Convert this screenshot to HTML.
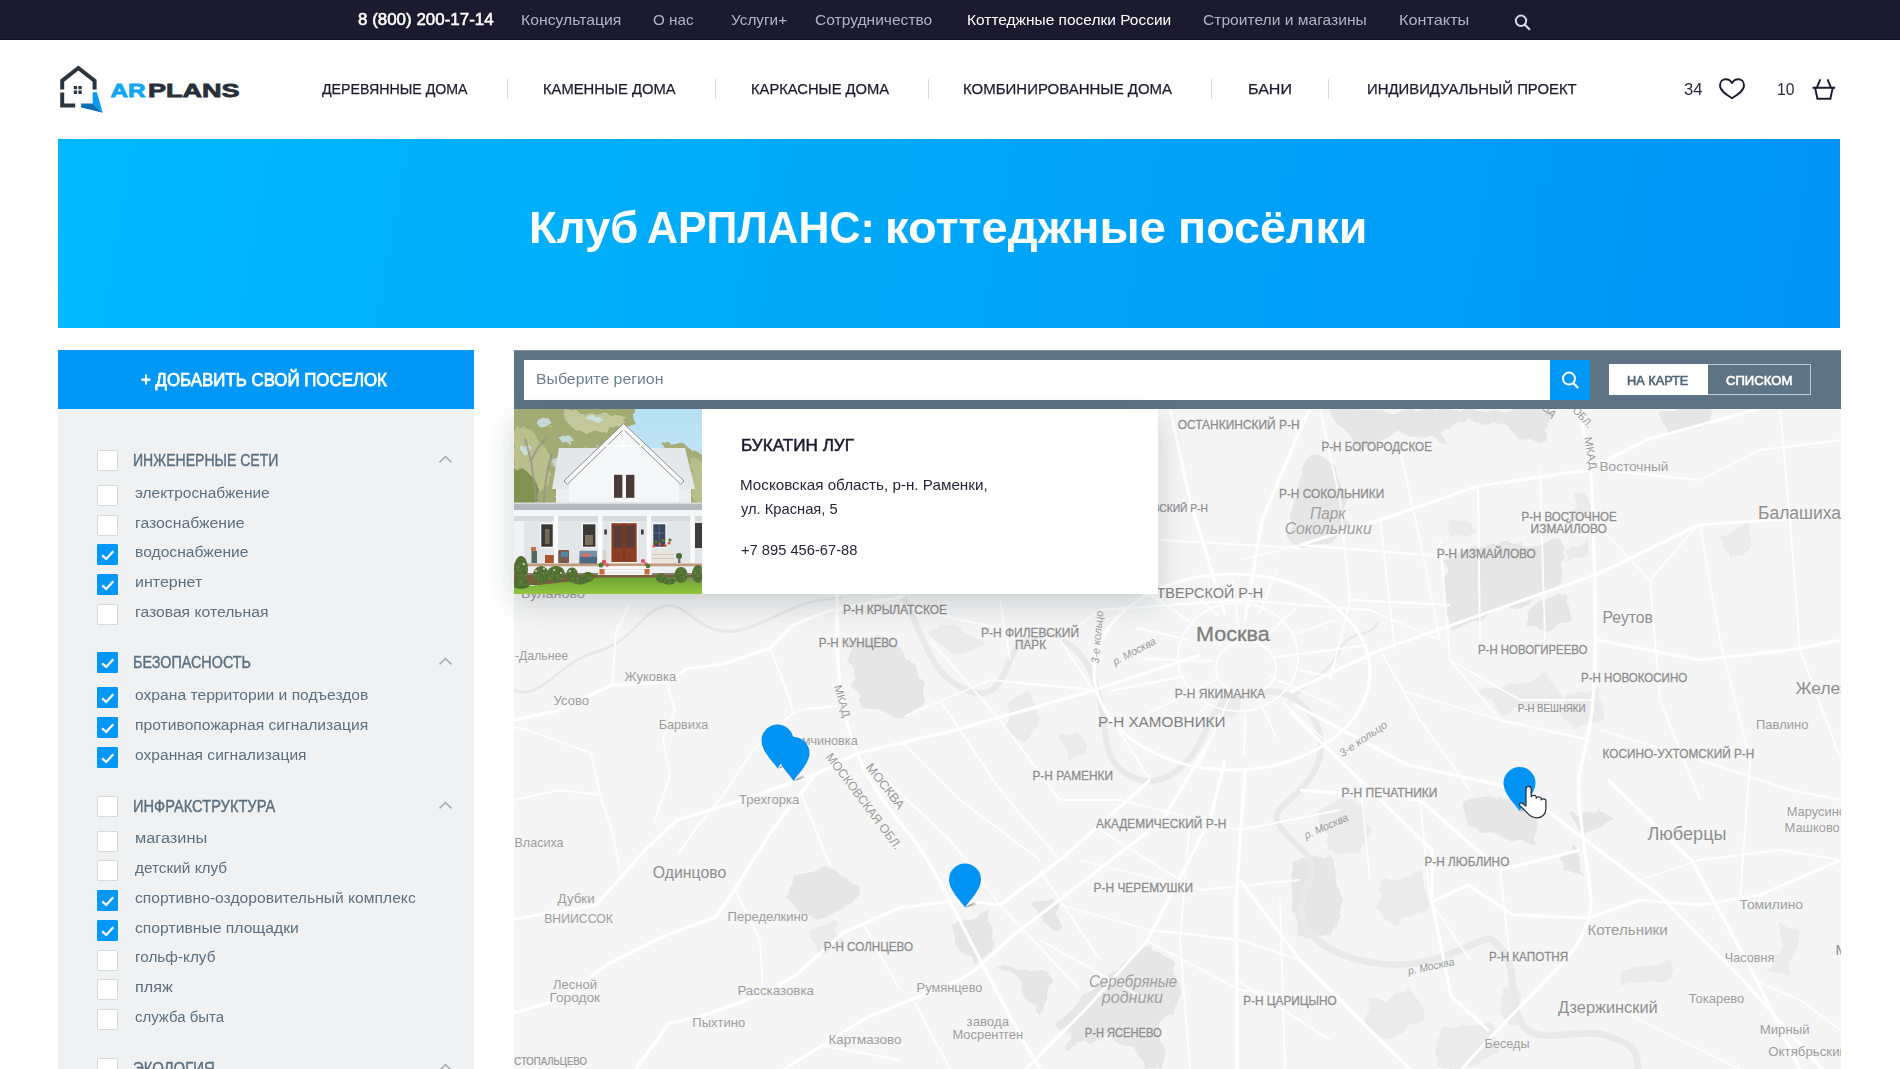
<!DOCTYPE html>
<html lang="ru">
<head>
<meta charset="utf-8">
<title>Клуб АРПЛАНС: коттеджные посёлки</title>
<style>
*{box-sizing:border-box;margin:0;padding:0}
html,body{width:1900px;height:1069px;overflow:hidden;background:#fff}
body{position:relative;font-family:"Liberation Sans",sans-serif;color:#1c1a2e}
.abs{position:absolute}
.tx{position:absolute;white-space:nowrap;line-height:20px;display:block;transform-origin:0 0}
.topbar{left:0;top:0;width:1900px;height:40px;background:#1c1a2e;border-bottom:1px solid #100f1c}
.sep{position:absolute;top:79px;width:1px;height:20px;background:#d3dae2}
.banner{left:58px;top:139px;width:1782px;height:189px;background:linear-gradient(100deg,#00b9fb 0%,#00a8f8 45%,#0094f5 100%)}
.sidebtn{left:58px;top:350px;width:416px;height:59px;background:#0097f6}
.sidebody{left:58px;top:409px;width:416px;height:660px;background:#f0f1f3}
.cb{position:absolute;left:97px;width:21px;height:21px;background:#fff;border:1px solid #d6dade;border-radius:1px}
.cb.on{background:#0097f6;border-color:#0097f6}
.cb.on svg{position:absolute;left:-1px;top:-1px;width:21px;height:21px}
.chev{position:absolute;left:438px;width:15px;height:9px}
.mapwrap{left:514px;top:350px;width:1327px;height:719px;background:#f5f5f5;overflow:hidden}
.toolbar{left:514px;top:350px;width:1327px;height:59px;background:#5e7485;border-top:1px solid #7f919e}
.input{left:523.5px;top:359.7px;width:1026.5px;height:40px;background:#fff}
.sbtn{left:1550px;top:359.7px;width:40px;height:40px;background:#0097f6}
.tg1{left:1609px;top:364px;width:99px;height:31px;background:#fff}
.tg2{left:1708px;top:364px;width:103px;height:31px;border:1px solid #c3ccd4;border-left:none;background:#5e7485}
.card{left:514px;top:409px;width:644px;height:185px;background:#fff;box-shadow:0 10px 28px rgba(30,40,50,.18)}
.photo{left:514px;top:409px;width:188px;height:185px;overflow:hidden}
</style>
</head>
<body>

<div class="abs topbar"></div>
<svg class="abs" style="left:1513px;top:13px" width="19" height="19" viewBox="0 0 19 19"><circle cx="8" cy="7.8" r="5.2" fill="none" stroke="#d9d9e2" stroke-width="2"/><path d="M11.9 11.8 L16.3 16.2" stroke="#d9d9e2" stroke-width="2.2" stroke-linecap="round"/></svg>
<!-- logo -->
<svg class="abs" style="left:55px;top:60px" width="195" height="58" viewBox="55 60 195 58">
  <path d="M60.2 89.5 V79.7 L78.3 65.6 L96.6 79.7 V89.5 H92.6 V81.7 L78.3 70.6 L64.2 81.7 V89.5 Z" fill="#2b353d"/>
  <path d="M60.2 92.5 H64.2 V103.6 H75.2 V107.6 H60.2 Z" fill="#2b353d"/>
  <path d="M73.8 86 h3.3 v3.3 h-3.3z M78.4 86 h3.3 v3.3 h-3.3z M73.8 90.6 h3.3 v3.3 h-3.3z M78.4 90.6 h3.3 v3.3 h-3.3z" fill="#2b353d"/>
  <path d="M92.6 92.2 H96.9 L102.8 112.8 L92.6 103.6 Z" fill="#0a9bf5"/>
  <path d="M81.2 103.6 H92.6 L102.8 112.8 L81.2 107.6 Z" fill="#0f6fb4"/>
  <text x="110.4" y="96.8" font-family="Liberation Sans, sans-serif" font-weight="700" font-size="19.2" textLength="35" lengthAdjust="spacingAndGlyphs" fill="#12a5f4" stroke="#12a5f4" stroke-width=".8" stroke-linejoin="miter">AR</text>
  <text x="147.9" y="96.8" font-family="Liberation Sans, sans-serif" font-weight="700" font-size="19.2" textLength="91.7" lengthAdjust="spacingAndGlyphs" fill="#27303a" stroke="#27303a" stroke-width=".8" stroke-linejoin="miter">PLANS</text>
</svg>
<div class="sep" style="left:507px"></div>
<div class="sep" style="left:715px"></div>
<div class="sep" style="left:928px"></div>
<div class="sep" style="left:1211px"></div>
<div class="sep" style="left:1328px"></div>
<!-- heart -->
<svg class="abs" style="left:1716px;top:75px" width="32" height="28" viewBox="1716 75 32 28"><path d="M1732 98.2 C1727 95 1720 91 1720 85.2 C1720 81.6 1722.6 79.2 1725.8 79.2 C1728.4 79.2 1730.6 80.6 1732 83 C1733.4 80.6 1735.6 79.2 1738.2 79.2 C1741.4 79.2 1744 81.6 1744 85.2 C1744 91 1737 95 1732 98.2 Z" fill="none" stroke="#1c1a2e" stroke-width="1.9" stroke-linejoin="round"/></svg>
<!-- basket -->
<svg class="abs" style="left:1808px;top:75px" width="32" height="28" viewBox="1808 75 32 28"><path d="M1812.6 87.7 H1835.2 M1815.1 87.7 L1817.4 98.7 H1830.4 L1832.7 87.7 M1820.3 79.3 L1816.9 87.4 M1827.5 79.3 L1830.9 87.4" fill="none" stroke="#1c1a2e" stroke-width="1.9"/></svg>
<div class="abs banner"></div>

<div class="abs sidebtn"></div>
<div class="abs sidebody"></div>
<div class="cb" style="top:450.2px"></div>
<svg class="chev" style="top:454.9px" viewBox="0 0 15 9"><path d="M1.5 7.4 L7.5 1.7 L13.5 7.4" fill="none" stroke="#a6b1bc" stroke-width="1.6"/></svg>
<div class="cb" style="top:485.0px"></div>
<div class="cb" style="top:514.7px"></div>
<div class="cb on" style="top:544.3px"><svg viewBox="0 0 21 21"><path d="M5.2 11.4 L9.2 15 L16.3 7.2" fill="none" stroke="#fff" stroke-width="2.3"/></svg></div>
<div class="cb on" style="top:574.0px"><svg viewBox="0 0 21 21"><path d="M5.2 11.4 L9.2 15 L16.3 7.2" fill="none" stroke="#fff" stroke-width="2.3"/></svg></div>
<div class="cb" style="top:603.8px"></div>
<div class="cb on" style="top:652.4px"><svg viewBox="0 0 21 21"><path d="M5.2 11.4 L9.2 15 L16.3 7.2" fill="none" stroke="#fff" stroke-width="2.3"/></svg></div>
<svg class="chev" style="top:657.1px" viewBox="0 0 15 9"><path d="M1.5 7.4 L7.5 1.7 L13.5 7.4" fill="none" stroke="#a6b1bc" stroke-width="1.6"/></svg>
<div class="cb on" style="top:687.4px"><svg viewBox="0 0 21 21"><path d="M5.2 11.4 L9.2 15 L16.3 7.2" fill="none" stroke="#fff" stroke-width="2.3"/></svg></div>
<div class="cb on" style="top:717.0px"><svg viewBox="0 0 21 21"><path d="M5.2 11.4 L9.2 15 L16.3 7.2" fill="none" stroke="#fff" stroke-width="2.3"/></svg></div>
<div class="cb on" style="top:746.7px"><svg viewBox="0 0 21 21"><path d="M5.2 11.4 L9.2 15 L16.3 7.2" fill="none" stroke="#fff" stroke-width="2.3"/></svg></div>
<div class="cb" style="top:796.2px"></div>
<svg class="chev" style="top:800.9px" viewBox="0 0 15 9"><path d="M1.5 7.4 L7.5 1.7 L13.5 7.4" fill="none" stroke="#a6b1bc" stroke-width="1.6"/></svg>
<div class="cb" style="top:830.6px"></div>
<div class="cb" style="top:860.2px"></div>
<div class="cb on" style="top:889.9px"><svg viewBox="0 0 21 21"><path d="M5.2 11.4 L9.2 15 L16.3 7.2" fill="none" stroke="#fff" stroke-width="2.3"/></svg></div>
<div class="cb on" style="top:919.7px"><svg viewBox="0 0 21 21"><path d="M5.2 11.4 L9.2 15 L16.3 7.2" fill="none" stroke="#fff" stroke-width="2.3"/></svg></div>
<div class="cb" style="top:949.5px"></div>
<div class="cb" style="top:979.1px"></div>
<div class="cb" style="top:1008.9px"></div>
<div class="cb" style="top:1058.1px"></div>
<svg class="chev" style="top:1062.8px" viewBox="0 0 15 9"><path d="M1.5 7.4 L7.5 1.7 L13.5 7.4" fill="none" stroke="#a6b1bc" stroke-width="1.6"/></svg>
<div class="abs mapwrap">
<svg width="1327" height="719" viewBox="514 350 1327 719" font-family="Liberation Sans, sans-serif">
<rect x="514" y="350" width="1327" height="719" fill="#f5f5f5"/>
<defs><filter id="rough" x="-2%" y="-2%" width="104%" height="104%"><feTurbulence type="fractalNoise" baseFrequency="0.045" numOctaves="3" seed="11" result="n"/><feDisplacementMap in="SourceGraphic" in2="n" scale="16" xChannelSelector="R" yChannelSelector="G"/></filter></defs>
<g filter="url(#rough)">
<polygon points="1330,409 1551,409 1546,439 1517,442 1507,427 1461,420 1446,431 1446,444 1395,432 1380,440 1362,452 1340,430" fill="#e6e6e6"/>
<polygon points="1656,409 1718,409 1708,425 1666,432" fill="#e6e6e6"/>
<polygon points="1312,452 1338,466 1343,492 1346,512 1352,526 1330,545 1300,548 1288,536 1292,510 1298,480" fill="#e6e6e6"/>
<polygon points="1444,562 1470,548 1560,541 1562,588 1520,603 1478,620 1452,630 1446,600" fill="#e6e6e6"/>
<polygon points="1527,606 1562,594 1570,622 1545,632 1530,624" fill="#e6e6e6"/>
<polygon points="1575,495 1590,488 1592,520 1571,524" fill="#ebebeb"/>
<polygon points="1562,548 1592,540 1592,556 1566,562" fill="#ebebeb"/>
<polygon points="1453,525 1470,520 1478,530 1462,540 1450,536" fill="#ebebeb"/>
<polygon points="846,640 878,636 905,650 922,676 925,700 905,716 872,712 852,690" fill="#e6e6e6"/>
<polygon points="930,632 960,625 985,640 975,655 945,650" fill="#ebebeb"/>
<polygon points="1010,700 1032,694 1040,720 1022,742 1005,730" fill="#ebebeb"/>
<polygon points="1060,738 1078,730 1090,748 1072,760" fill="#ebebeb"/>
<polygon points="1216,700 1236,694 1240,712 1222,722" fill="#ebebeb"/>
<polygon points="1462,801 1500,796 1535,804 1537,845 1503,840 1468,826" fill="#e6e6e6"/>
<polygon points="1568,815 1600,807 1608,820 1587,837" fill="#e6e6e6"/>
<polygon points="1573,842 1584,874 1565,875 1562,856" fill="#e6e6e6"/>
<polygon points="1318,806 1352,800 1372,826 1360,856 1330,850" fill="#ebebeb"/>
<polygon points="1560,700 1600,688 1606,720 1572,730" fill="#ebebeb"/>
<polygon points="1480,690 1552,672 1560,700 1500,716" fill="#ebebeb"/>
<polygon points="1296,862 1334,858 1342,900 1330,936 1300,940 1290,905" fill="#e6e6e6"/>
<polygon points="1380,880 1420,872 1432,905 1400,925 1378,910" fill="#ebebeb"/>
<polygon points="950,925 987,913 993,930 985,962 976,966 958,948" fill="#e6e6e6"/>
<polygon points="1031,902 1053,898 1064,925 1055,934 1042,921" fill="#e6e6e6"/>
<polygon points="997,967 1047,966 1055,983 1040,1015 1024,1002 1021,981" fill="#e6e6e6"/>
<polygon points="1147,943 1174,962 1179,1004 1161,1025 1163,1069 1144,1069 1129,1044 1108,1038 1068,1049 1060,1020 1084,994 1116,970" fill="#e6e6e6"/>
<polygon points="795,872 830,866 858,884 852,905 826,918 800,915 788,896" fill="#e6e6e6"/>
<polygon points="808,928 834,922 840,945 818,955" fill="#ebebeb"/>
<polygon points="1370,1000 1415,990 1425,1020 1390,1040 1368,1028" fill="#ebebeb"/>
<polygon points="1502,985 1518,980 1522,1020 1508,1026" fill="#ebebeb"/>
<polygon points="1440,1030 1490,1022 1500,1050 1460,1069 1435,1069" fill="#ebebeb"/>
<polygon points="1778,920 1800,931 1789,975 1770,972 1781,942" fill="#ebebeb"/>
<polygon points="1619,975 1670,961 1673,980 1624,983" fill="#ebebeb"/>
<polygon points="1724,540 1744,520 1750,548 1730,560" fill="#ebebeb"/>
</g>
<g fill="none" stroke="#e9e9e9" stroke-linecap="round" stroke-linejoin="round">
<path d="M514,690 C540,702 556,664 596,652 S640,612 664,606 S700,640 740,630 S790,600 840,598" stroke-width="3"/>
<path d="M905,600 C925,640 930,672 962,688 S1002,680 1010,660 S1040,628 1062,640 S1092,668 1100,700 S1100,760 1130,776 S1190,768 1206,730 S1232,700 1252,694 S1296,692 1312,716 S1322,770 1298,792 S1268,816 1290,838 S1316,858 1310,880" stroke-width="6"/>
<path d="M1310,880 C1296,905 1298,930 1327,947 S1400,972 1445,956 S1486,930 1502,950 S1508,1000 1522,1024 S1580,1026 1608,1036 S1636,1050 1638,1069" stroke-width="7"/>
<path d="M1290,700 C1310,680 1330,672 1340,650 S1370,640 1378,622" stroke-width="2.5"/>
</g>
<g fill="none" stroke="#fff" stroke-width="1.8" stroke-linejoin="round" opacity=".9">
<path d="M1380,520 L1395,650"/>
<path d="M1478,486 L1480,640"/>
<path d="M1440,540 L1450,660 L1500,720"/>
<path d="M1540,470 L1545,640"/>
<path d="M1300,545 L1440,556"/>
<path d="M1350,600 L1450,605"/>
<path d="M1240,560 L1300,545"/>
<path d="M1160,540 L1300,548"/>
<path d="M1100,610 L1240,600 L1370,610 L1440,640"/>
<path d="M1320,409 L1340,500 L1350,600 L1330,680"/>
<path d="M1400,450 L1420,540 L1440,640"/>
<path d="M1600,470 L1700,480 L1760,450 L1841,440"/>
<path d="M1700,525 L1720,640 L1750,760 L1740,900"/>
<path d="M1650,580 L1660,700 L1700,800"/>
<path d="M1780,409 L1790,520 L1800,650 L1841,760"/>
<path d="M1600,730 L1700,760 L1790,790 L1841,800"/>
<path d="M1640,880 L1700,860 L1780,850 L1841,860"/>
<path d="M1754,980 L1800,1000 L1841,1030"/>
<path d="M1600,1000 L1680,1040 L1740,1069"/>
<path d="M1500,870 L1510,960"/>
<path d="M1420,800 L1430,900 L1470,960"/>
<path d="M1360,780 L1370,880"/>
<path d="M1400,690 L1500,720 L1590,740"/>
<path d="M1380,650 L1420,720 L1470,790"/>
<path d="M1450,660 L1520,700 L1593,700"/>
<path d="M1120,800 L1240,830 L1340,810"/>
<path d="M1080,860 L1200,890 L1300,880"/>
<path d="M1060,905 L1150,930 L1240,940 L1300,960"/>
<path d="M1147,941 L1240,990 L1330,1000"/>
<path d="M1190,820 L1180,940 L1190,1069"/>
<path d="M1280,900 L1285,1069"/>
<path d="M1100,830 L1180,880"/>
<path d="M1237,980 L1330,1040"/>
<path d="M1040,870 L1100,960"/>
<path d="M1000,905 L1080,990"/>
<path d="M1040,940 L1147,1000"/>
<path d="M900,740 L960,800 L1040,860"/>
<path d="M940,700 L1000,790 L1060,860"/>
<path d="M1000,720 L1060,800 L1120,800"/>
<path d="M870,765 L950,840 L1000,905"/>
<path d="M905,716 L990,680 L1095,690"/>
<path d="M930,640 L1000,720"/>
<path d="M1060,640 L1100,700 L1150,780"/>
<path d="M960,620 L1060,640 L1100,610"/>
<path d="M880,600 L960,620"/>
<path d="M1000,600 L1010,660"/>
<path d="M612,685 L616,632 L630,604"/>
<path d="M667,683 L675,711 L663,739 L670,776 L654,823"/>
<path d="M514,727 L528,730 L591,753 L600,795 L612,830 L620,870"/>
<path d="M753,750 L793,713 L807,709 L837,706"/>
<path d="M753,750 L723,795 L700,823 L678,854"/>
<path d="M735,889 L760,940 L763,994"/>
<path d="M514,800 L560,790 L600,795"/>
<path d="M820,1045 L900,1060"/>
<path d="M915,1003 L950,1069"/>
<path d="M862,922 L900,990"/>
<path d="M800,790 L830,866"/>
<path d="M770,648 L790,700 L793,713"/>
<path d="M1593,520 L1650,580 L1698,525"/>
<path d="M1300,670 L1333,677"/>
<path d="M1269,676 L1340,708"/>
<path d="M1282,702 L1328,743"/>
<path d="M1254,689 L1276,737"/>
<path d="M1245,716 L1244,757"/>
<path d="M1233,690 L1199,766"/>
<path d="M1207,706 L1180,728"/>
<path d="M1217,679 L1142,716"/>
<path d="M1185,676 L1109,691"/>
<path d="M1212,661 L1143,659"/>
<path d="M1190,640 L1136,628"/>
<path d="M1222,644 L1148,593"/>
<path d="M1219,616 L1200,599"/>
<path d="M1240,637 L1232,579"/>
<path d="M1259,614 L1277,570"/>
<path d="M1260,642 L1296,608"/>
<path d="M1291,636 L1334,620"/>
<path d="M1271,658 L1367,645"/>
<ellipse cx="1238" cy="657" rx="60" ry="54"/>
<ellipse cx="1246" cy="668" rx="30" ry="27"/>
</g>
<g fill="none" stroke="#fff" stroke-width="3.2" stroke-linejoin="round">
<path d="M846,409 C838,520 832,640 842,700 S880,800 910,835 S975,960 1040,1069"/>
<path d="M1575,409 C1588,430 1592,470 1593,520 S1598,640 1593,700 S1576,760 1579,800 S1590,880 1591,900 S1580,945 1559,967 S1489,1037 1462,1069"/>
<path d="M1290,692 L1380,650 L1598,574 L1698,525 L1841,515"/>
<path d="M1300,545 L1380,520 L1478,486 L1588,470 L1649,439 L1759,409"/>
<path d="M1295,705 L1408,765 L1500,785 L1546,810 L1660,896 L1743,980 L1822,1069"/>
<path d="M1608,780 L1692,861 L1751,969 L1800,1069"/>
<path d="M1290,712 L1360,780 L1432,850 L1432,902 L1451,996 L1489,1031"/>
<path d="M1432,902 L1468,885 L1513,915 L1589,918"/>
<path d="M1200,655 L1095,690 L956,730 L858,753 L816,774 L746,799 L677,820 L645,850 L596,905 L514,919"/>
<path d="M514,720 L556,711 L591,695 L612,685 L667,682 L686,669 L723,664 L770,648 L793,625 L828,611 L905,596"/>
<path d="M816,774 L772,830 L735,889 L716,917 L664,936 L608,964 L561,999 L514,1013"/>
<path d="M1210,740 L1163,820 L1010,938 L979,967 L960,980 L866,1018 L784,1069"/>
<path d="M1225,760 L1210,820 L1147,941 L1085,1010 L1026,1069"/>
<path d="M1245,770 L1236,900 L1237,1069"/>
<path d="M1240,880 L1300,960 L1380,1040 L1410,1069"/>
<path d="M1150,780 L1060,860 L1000,905 L960,900"/>
<path d="M1245,620 L1262,520 L1300,430 L1310,409"/>
<path d="M1225,615 L1190,500 L1170,409"/>
<path d="M1300,790 L1420,800 L1500,870 L1580,850"/>
<path d="M1597,640 L1700,660 L1790,650 L1841,640"/>
<path d="M1589,918 L1640,900 L1700,905 L1760,895 L1841,860"/>
<path d="M960,900 L899,908 L843,933 L796,975 L763,994 L697,1018 L669,1023 L636,1069"/>
<ellipse cx="1232" cy="672" rx="138" ry="98"/>
</g>
<g>
<text x="1177.7" y="428.8" font-size="12.2" fill="#8d8d8d" stroke="#8d8d8d" stroke-width="0.27" textLength="121.9" lengthAdjust="spacingAndGlyphs">ОСТАНКИНСКИЙ Р-Н</text>
<text x="1321.5" y="450.8" font-size="12.2" fill="#8d8d8d" stroke="#8d8d8d" stroke-width="0.27" textLength="110.4" lengthAdjust="spacingAndGlyphs">Р-Н БОГОРОДСКОЕ</text>
<text x="1279.0" y="497.6" font-size="12.2" fill="#8d8d8d" stroke="#8d8d8d" stroke-width="0.27" textLength="105.2" lengthAdjust="spacingAndGlyphs">Р-Н СОКОЛЬНИКИ</text>
<text x="1521.4" y="520.9" font-size="12.2" fill="#8d8d8d" stroke="#8d8d8d" stroke-width="0.27" textLength="95.4" lengthAdjust="spacingAndGlyphs">Р-Н ВОСТОЧНОЕ</text>
<text x="1530.6" y="533.2" font-size="12.2" fill="#8d8d8d" stroke="#8d8d8d" stroke-width="0.27" textLength="76.3" lengthAdjust="spacingAndGlyphs">ИЗМАЙЛОВО</text>
<text x="1436.7" y="558.4" font-size="12.2" fill="#8d8d8d" stroke="#8d8d8d" stroke-width="0.27" textLength="99.1" lengthAdjust="spacingAndGlyphs">Р-Н ИЗМАЙЛОВО</text>
<text x="843.0" y="614.0" font-size="12.2" fill="#8d8d8d" stroke="#8d8d8d" stroke-width="0.27" textLength="104.0" lengthAdjust="spacingAndGlyphs">Р-Н КРЫЛАТСКОЕ</text>
<text x="818.7" y="646.5" font-size="12.2" fill="#8d8d8d" stroke="#8d8d8d" stroke-width="0.27" textLength="79.0" lengthAdjust="spacingAndGlyphs">Р-Н КУНЦЕВО</text>
<text x="981.0" y="636.8" font-size="12.2" fill="#8d8d8d" stroke="#8d8d8d" stroke-width="0.27" textLength="98.0" lengthAdjust="spacingAndGlyphs">Р-Н ФИЛЕВСКИЙ</text>
<text x="1015.0" y="649.2" font-size="12.2" fill="#8d8d8d" stroke="#8d8d8d" stroke-width="0.27" textLength="31.0" lengthAdjust="spacingAndGlyphs">ПАРК</text>
<text x="1478.0" y="653.6" font-size="12.2" fill="#8d8d8d" stroke="#8d8d8d" stroke-width="0.27" textLength="109.4" lengthAdjust="spacingAndGlyphs">Р-Н НОВОГИРЕЕВО</text>
<text x="1581.0" y="681.6" font-size="12.2" fill="#8d8d8d" stroke="#8d8d8d" stroke-width="0.27" textLength="106.2" lengthAdjust="spacingAndGlyphs">Р-Н НОВОКОСИНО</text>
<text x="1174.7" y="698.2" font-size="12.2" fill="#8d8d8d" stroke="#8d8d8d" stroke-width="0.27" textLength="90.3" lengthAdjust="spacingAndGlyphs">Р-Н ЯКИМАНКА</text>
<text x="1602.5" y="757.9" font-size="12.2" fill="#8d8d8d" stroke="#8d8d8d" stroke-width="0.27" textLength="151.8" lengthAdjust="spacingAndGlyphs">КОСИНО-УХТОМСКИЙ Р-Н</text>
<text x="1032.4" y="780.0" font-size="12.2" fill="#8d8d8d" stroke="#8d8d8d" stroke-width="0.27" textLength="80.6" lengthAdjust="spacingAndGlyphs">Р-Н РАМЕНКИ</text>
<text x="1341.6" y="796.6" font-size="12.2" fill="#8d8d8d" stroke="#8d8d8d" stroke-width="0.27" textLength="95.8" lengthAdjust="spacingAndGlyphs">Р-Н ПЕЧАТНИКИ</text>
<text x="1096.0" y="828.2" font-size="12.2" fill="#8d8d8d" stroke="#8d8d8d" stroke-width="0.27" textLength="130.3" lengthAdjust="spacingAndGlyphs">АКАДЕМИЧЕСКИЙ Р-Н</text>
<text x="1424.5" y="865.8" font-size="12.2" fill="#8d8d8d" stroke="#8d8d8d" stroke-width="0.27" textLength="84.8" lengthAdjust="spacingAndGlyphs">Р-Н ЛЮБЛИНО</text>
<text x="1093.6" y="891.7" font-size="12.2" fill="#8d8d8d" stroke="#8d8d8d" stroke-width="0.27" textLength="99.4" lengthAdjust="spacingAndGlyphs">Р-Н ЧЕРЕМУШКИ</text>
<text x="823.8" y="951.0" font-size="12.2" fill="#8d8d8d" stroke="#8d8d8d" stroke-width="0.27" textLength="89.2" lengthAdjust="spacingAndGlyphs">Р-Н СОЛНЦЕВО</text>
<text x="1489.0" y="960.9" font-size="12.2" fill="#8d8d8d" stroke="#8d8d8d" stroke-width="0.27" textLength="79.2" lengthAdjust="spacingAndGlyphs">Р-Н КАПОТНЯ</text>
<text x="1243.2" y="1004.7" font-size="12.2" fill="#8d8d8d" stroke="#8d8d8d" stroke-width="0.27" textLength="93.6" lengthAdjust="spacingAndGlyphs">Р-Н ЦАРИЦЫНО</text>
<text x="1084.8" y="1037.3" font-size="12.2" fill="#8d8d8d" stroke="#8d8d8d" stroke-width="0.27" textLength="76.8" lengthAdjust="spacingAndGlyphs">Р-Н ЯСЕНЕВО</text>
<text x="1517.7" y="712.2" font-size="10.3" fill="#979797" stroke="#979797" stroke-width="0.23" textLength="67.8" lengthAdjust="spacingAndGlyphs">Р-Н ВЕШНЯКИ</text>
<text x="1146.0" y="511.6" font-size="10.8" fill="#8d8d8d" stroke="#8d8d8d" stroke-width="0.24" textLength="62.0" lengthAdjust="spacingAndGlyphs">ЕВСКИЙ Р-Н</text>
<text x="514.3" y="1065.2" font-size="10.3" fill="#979797" stroke="#979797" stroke-width="0.23" textLength="72.6" lengthAdjust="spacingAndGlyphs">СТОПАЛЬЦЕВО</text>
<text x="1156.5" y="597.7" font-size="15.5" fill="#808080" textLength="106.7" lengthAdjust="spacingAndGlyphs">ТВЕРСКОЙ Р-Н</text>
<text x="1097.9" y="727.4" font-size="15.5" fill="#808080" textLength="127.6" lengthAdjust="spacingAndGlyphs">Р-Н ХАМОВНИКИ</text>
<text x="1196.0" y="641.3" font-size="20.5" fill="#7e7e7e" stroke="#7e7e7e" stroke-width="0.30" textLength="73.7" lengthAdjust="spacingAndGlyphs">Москва</text>
<text x="1599.5" y="471.3" font-size="13.5" fill="#9e9e9e" textLength="68.9" lengthAdjust="spacingAndGlyphs">Восточный</text>
<text x="1756.0" y="729.4" font-size="13" fill="#9e9e9e" textLength="52.4" lengthAdjust="spacingAndGlyphs">Павлино</text>
<text x="1786.7" y="815.6" font-size="13" fill="#9e9e9e" textLength="59.3" lengthAdjust="spacingAndGlyphs">Марусино</text>
<text x="1784.5" y="831.5" font-size="13" fill="#9e9e9e" textLength="55.3" lengthAdjust="spacingAndGlyphs">Машково</text>
<text x="1739.5" y="908.8" font-size="13" fill="#9e9e9e" textLength="63.5" lengthAdjust="spacingAndGlyphs">Томилино</text>
<text x="1724.8" y="961.5" font-size="13" fill="#9e9e9e" textLength="49.7" lengthAdjust="spacingAndGlyphs">Часовня</text>
<text x="1688.7" y="1002.6" font-size="13" fill="#9e9e9e" textLength="55.6" lengthAdjust="spacingAndGlyphs">Токарево</text>
<text x="1759.8" y="1034.0" font-size="13" fill="#9e9e9e" textLength="49.7" lengthAdjust="spacingAndGlyphs">Мирный</text>
<text x="1484.6" y="1048.0" font-size="13" fill="#9e9e9e" textLength="44.9" lengthAdjust="spacingAndGlyphs">Беседы</text>
<text x="1768.3" y="1056.1" font-size="13" fill="#9e9e9e" textLength="78.7" lengthAdjust="spacingAndGlyphs">Октябрьский</text>
<text x="514.5" y="847.2" font-size="13" fill="#9e9e9e" textLength="49.1" lengthAdjust="spacingAndGlyphs">Власиха</text>
<text x="557.6" y="902.9" font-size="13" fill="#9e9e9e" textLength="37.0" lengthAdjust="spacingAndGlyphs">Дубки</text>
<text x="544.2" y="923.0" font-size="13" fill="#9e9e9e" textLength="68.8" lengthAdjust="spacingAndGlyphs">ВНИИССОК</text>
<text x="727.6" y="920.5" font-size="13" fill="#9e9e9e" textLength="80.4" lengthAdjust="spacingAndGlyphs">Переделкино</text>
<text x="553.0" y="988.6" font-size="13" fill="#9e9e9e" textLength="44.0" lengthAdjust="spacingAndGlyphs">Лесной</text>
<text x="549.5" y="1001.6" font-size="13" fill="#9e9e9e" textLength="50.5" lengthAdjust="spacingAndGlyphs">Городок</text>
<text x="737.4" y="995.3" font-size="13" fill="#9e9e9e" textLength="76.6" lengthAdjust="spacingAndGlyphs">Рассказовка</text>
<text x="916.6" y="991.7" font-size="13" fill="#9e9e9e" textLength="65.9" lengthAdjust="spacingAndGlyphs">Румянцево</text>
<text x="692.3" y="1027.4" font-size="13" fill="#9e9e9e" textLength="52.9" lengthAdjust="spacingAndGlyphs">Пыхтино</text>
<text x="966.6" y="1025.6" font-size="13" fill="#9e9e9e" textLength="42.4" lengthAdjust="spacingAndGlyphs">завода</text>
<text x="952.5" y="1038.6" font-size="13" fill="#9e9e9e" textLength="70.5" lengthAdjust="spacingAndGlyphs">Мосрентген</text>
<text x="828.4" y="1043.9" font-size="13" fill="#9e9e9e" textLength="73.0" lengthAdjust="spacingAndGlyphs">Картмазово</text>
<text x="521.0" y="598.1" font-size="13" fill="#9e9e9e" textLength="64.0" lengthAdjust="spacingAndGlyphs">Буланово</text>
<text x="515.0" y="659.6" font-size="13" fill="#9e9e9e" textLength="53.0" lengthAdjust="spacingAndGlyphs">-Дальнее</text>
<text x="624.5" y="680.8" font-size="13" fill="#9e9e9e" textLength="51.8" lengthAdjust="spacingAndGlyphs">Жуковка</text>
<text x="553.5" y="705.0" font-size="13" fill="#9e9e9e" textLength="35.5" lengthAdjust="spacingAndGlyphs">Усово</text>
<text x="658.7" y="729.4" font-size="13" fill="#9e9e9e" textLength="49.5" lengthAdjust="spacingAndGlyphs">Барвиха</text>
<text x="785.5" y="745.3" font-size="13" fill="#9e9e9e" textLength="72.2" lengthAdjust="spacingAndGlyphs">Немчиновка</text>
<text x="739.0" y="803.6" font-size="13" fill="#9e9e9e" textLength="60.3" lengthAdjust="spacingAndGlyphs">Трехгорка</text>
<text x="1587.4" y="934.6" font-size="15" fill="#9e9e9e" textLength="80.3" lengthAdjust="spacingAndGlyphs">Котельники</text>
<text x="1758.0" y="519.2" font-size="18" fill="#8f8f8f" textLength="83.0" lengthAdjust="spacingAndGlyphs">Балашиха</text>
<text x="1602.5" y="622.8" font-size="17" fill="#8f8f8f" textLength="50.5" lengthAdjust="spacingAndGlyphs">Реутов</text>
<text x="1795.5" y="694.0" font-size="17" fill="#8f8f8f" textLength="153.5" lengthAdjust="spacingAndGlyphs">Железнодорожный</text>
<text x="1647.4" y="839.6" font-size="18" fill="#8f8f8f" textLength="79.2" lengthAdjust="spacingAndGlyphs">Люберцы</text>
<text x="652.8" y="877.5" font-size="16.5" fill="#8f8f8f" textLength="73.4" lengthAdjust="spacingAndGlyphs">Одинцово</text>
<text x="1557.9" y="1013.0" font-size="17" fill="#8f8f8f" textLength="99.8" lengthAdjust="spacingAndGlyphs">Дзержинский</text>
<text x="1835.5" y="954.6" font-size="15" fill="#8f8f8f" textLength="74.5" lengthAdjust="spacingAndGlyphs">Малаховка</text>
<text x="1310.0" y="518.7" font-size="16.5" fill="#a0a0a0" font-style="italic" textLength="35.5" lengthAdjust="spacingAndGlyphs">Парк</text>
<text x="1284.7" y="534.4" font-size="16.5" fill="#a0a0a0" font-style="italic" textLength="87.0" lengthAdjust="spacingAndGlyphs">Сокольники</text>
<text x="1089.0" y="986.9" font-size="16.5" fill="#a0a0a0" font-style="italic" textLength="88.0" lengthAdjust="spacingAndGlyphs">Серебряные</text>
<text x="1101.7" y="1002.8" font-size="16.5" fill="#a0a0a0" font-style="italic" textLength="61.3" lengthAdjust="spacingAndGlyphs">родники</text>
<text transform="translate(842.5 701.0) rotate(74)" x="-16.5" y="4.0" font-size="11" font-weight="400" fill="#9a9a9a" textLength="33.0" lengthAdjust="spacingAndGlyphs">МКАД</text>
<text transform="translate(1591.0 453.0) rotate(80)" x="-16.5" y="4.0" font-size="11" font-weight="400" fill="#9a9a9a" textLength="33.0" lengthAdjust="spacingAndGlyphs">МКАД</text>
<text transform="translate(864.0 801.0) rotate(53)" x="-58.5" y="4.5" font-size="12.5" font-weight="400" fill="#9a9a9a" textLength="117.0" lengthAdjust="spacingAndGlyphs">МОСКОВСКАЯ ОБЛ.</text>
<text transform="translate(885.5 786.0) rotate(52)" x="-27.0" y="4.5" font-size="12.5" font-weight="400" fill="#9a9a9a" textLength="54.0" lengthAdjust="spacingAndGlyphs">МОСКВА</text>
<text transform="translate(1583.0 417.0) rotate(48)" x="-12.0" y="4.0" font-size="11" font-weight="400" fill="#9a9a9a" textLength="24.0" lengthAdjust="spacingAndGlyphs">ОБЛ.</text>
<text transform="translate(1538.0 398.0) rotate(48)" x="-25.0" y="4.3" font-size="12" font-weight="400" fill="#9a9a9a" textLength="50.0" lengthAdjust="spacingAndGlyphs">МОСКВА</text>
<text transform="translate(1097.0 637.0) rotate(-85)" x="-26.5" y="4.0" font-size="11" font-weight="400" fill="#9a9a9a" font-style="italic" textLength="53.0" lengthAdjust="spacingAndGlyphs">3-е кольцо</text>
<text transform="translate(1363.0 738.5) rotate(-34)" x="-27.5" y="4.0" font-size="11" font-weight="400" fill="#9a9a9a" font-style="italic" textLength="55.0" lengthAdjust="spacingAndGlyphs">3-е кольцо</text>
<text transform="translate(1134.0 651.0) rotate(-28)" x="-23.5" y="4.0" font-size="11" font-weight="400" fill="#9a9a9a" font-style="italic" textLength="47.0" lengthAdjust="spacingAndGlyphs">р. Москва</text>
<text transform="translate(1326.0 826.0) rotate(-24)" x="-23.5" y="4.0" font-size="11" font-weight="400" fill="#9a9a9a" font-style="italic" textLength="47.0" lengthAdjust="spacingAndGlyphs">р. Москва</text>
<text transform="translate(1431.0 966.0) rotate(-12)" x="-23.5" y="4.0" font-size="11" font-weight="400" fill="#9a9a9a" font-style="italic" textLength="47.0" lengthAdjust="spacingAndGlyphs">р. Москва</text>
</g>
</svg></div>
<div class="abs toolbar"></div>
<div class="abs input"></div>
<div class="abs sbtn"><svg width="40" height="40" viewBox="0 0 40 40"><circle cx="19" cy="18.6" r="6" fill="none" stroke="#fff" stroke-width="2"/><path d="M23.4 23.2 L27.6 27.4" stroke="#fff" stroke-width="2.2" stroke-linecap="round"/></svg></div>
<div class="abs tg1"></div>
<div class="abs tg2"></div>
<div class="abs card"></div>
<div class="abs photo">
<svg width="188" height="185" viewBox="0 0 188 185">
<defs>
<linearGradient id="sky" x1="0" y1="0" x2="0" y2="1"><stop offset="0" stop-color="#b7e0f3"/><stop offset="1" stop-color="#dceff7"/></linearGradient>
<linearGradient id="lawn" x1="0" y1="0" x2="0" y2="1"><stop offset="0" stop-color="#6fa431"/><stop offset="1" stop-color="#8fc63f"/></linearGradient>
<filter id="leaf" x="-5%" y="-5%" width="110%" height="110%"><feTurbulence type="fractalNoise" baseFrequency="0.11" numOctaves="3" seed="7" result="n"/><feDisplacementMap in="SourceGraphic" in2="n" scale="9"/></filter>
<filter id="tex" x="0" y="0" width="100%" height="100%"><feTurbulence type="fractalNoise" baseFrequency="0.35" numOctaves="2" seed="3" result="n"/><feColorMatrix in="n" type="matrix" values="0 0 0 0 0.18  0 0 0 0 0.25  0 0 0 0 0.08  0 0 0 -1.6 0.95"/><feComposite in2="SourceGraphic" operator="in"/><feMerge><feMergeNode in="SourceGraphic"/><feMergeNode/></feMerge></filter>
</defs>
<rect width="188" height="185" fill="url(#sky)"/>
<!-- trees -->
<g filter="url(#leaf)">
<path d="M-5 -5 H122 C124 10 116 22 104 24 C98 34 84 40 70 38 C62 52 50 60 44 78 L44 100 L-5 100 Z" fill="#a3ab74"/>
<path d="M0 20 C12 14 22 22 26 34 C36 40 40 56 34 70 C30 86 14 92 0 88 Z" fill="#b9c08c"/>
<path d="M50 0 C70 6 92 2 112 8 C104 20 84 26 66 22 C56 20 50 10 50 0Z" fill="#c2c89c"/>
<path d="M-5 60 C8 56 18 64 22 76 C28 86 24 98 12 100 L-5 100Z" fill="#7f9250"/>
<path d="M150 36 C160 30 172 34 178 42 C186 40 192 50 192 60 L192 100 L170 100 C172 80 160 60 150 36Z" fill="#a5ad78"/>
<path d="M176 50 C184 46 192 54 192 64 L192 96 L180 96 Z" fill="#b7be8c"/>
</g>
<g fill="#cfe8f3" opacity=".75" filter="url(#leaf)"><ellipse cx="30" cy="14" rx="7" ry="5"/><ellipse cx="52" cy="30" rx="6" ry="4"/><ellipse cx="12" cy="40" rx="4" ry="6"/><ellipse cx="80" cy="10" rx="8" ry="3"/><ellipse cx="40" cy="52" rx="3" ry="5"/></g>
<g stroke="#9a9488" stroke-width="2.2" fill="none" opacity=".8"><path d="M22 100 C21 70 17 48 11 30 M17 52 C22 40 27 34 33 28 M30 100 C30 80 33 60 38 44"/></g>
<!-- side roofs -->
<path d="M45 39 H84 L56 72 L56 80 H38 Z" fill="#e3e7ea"/>
<path d="M136 39 H171 L181 80 H164 V72 Z" fill="#e6e9ec"/>
<path d="M42 80 H56 V95 H42Z M164 80 H177 V95 H164Z" fill="#eceef0"/>
<!-- gable -->
<path d="M109.6 17 L165 72 V95 H55 V72 Z" fill="#f5f6f7"/>
<path d="M109.6 14.5 L170 72 L166.5 75 L109.6 20.5 L53.5 75 L50 72 Z" fill="#fbfbfb" stroke="#7e848a" stroke-width=".9"/>
<path d="M109.6 20 V40 M92 37 H127" stroke="#fff" stroke-width="2"/>
<rect x="98.5" y="64" width="23" height="26.5" fill="#fafafa"/>
<rect x="100" y="65.8" width="8.4" height="23" fill="#4b3a37"/><rect x="112" y="65.8" width="8.4" height="23" fill="#4b3a37"/>
<!-- porch roof -->
<rect x="0" y="94.5" width="188" height="6.5" fill="#b3b9bf"/>
<rect x="0" y="93.5" width="188" height="1.6" fill="#d8dcdf"/>
<rect x="0" y="101" width="188" height="6" fill="#f4f5f6"/>
<!-- porch wall -->
<rect x="0" y="107" width="188" height="48" fill="#e3e6e9"/>
<rect x="0" y="107" width="188" height="5" fill="#cfd4d8" opacity=".7"/>
<rect x="0" y="112" width="10" height="40" fill="#f1f2f3"/>
<!-- windows -->
<rect x="26" y="114" width="14" height="25" fill="#f6f6f6"/><rect x="27.3" y="115.3" width="11.4" height="22.4" fill="#3a3835"/><rect x="31" y="120" width="4.5" height="15" fill="#9a8a6a" opacity=".6"/>
<rect x="67.7" y="114" width="15" height="25" fill="#f6f6f6"/><rect x="69" y="115.3" width="12.4" height="22.4" fill="#3a3835"/><rect x="71" y="126" width="8" height="10" fill="#a89878" opacity=".6"/>
<rect x="138" y="114" width="14.5" height="25" fill="#f6f6f6"/><rect x="139.3" y="115.3" width="12" height="22.4" fill="#3a4560"/><path d="M145.3 115.3 V137.7 M139.3 124 H151.3" stroke="#6f7890" stroke-width=".7"/>
<rect x="181" y="114" width="8" height="25" fill="#3f3d3b"/>
<!-- door -->
<rect x="96" y="113" width="28" height="41" fill="#f3f3f3"/>
<rect x="97.4" y="114.2" width="25.3" height="38.8" fill="#8b3f27"/>
<rect x="99.4" y="116.5" width="9.4" height="22" fill="#5a3d35"/><rect x="111.3" y="116.5" width="9.4" height="22" fill="#5a3d35"/>
<path d="M110 114.2 V153" stroke="#6a2c1a" stroke-width=".8"/>
<rect x="90.3" y="120.5" width="2.6" height="5" fill="#3b3b3b"/><rect x="127" y="120.5" width="2.6" height="5" fill="#3b3b3b"/>
<!-- furniture -->
<rect x="65.4" y="141.7" width="17.6" height="6" rx="1" fill="#7391a8"/><rect x="65.4" y="147.5" width="17.6" height="7.5" fill="#4f6a80"/><rect x="68.5" y="144.5" width="7" height="3.2" fill="#e46a5a"/>
<rect x="137.5" y="141.5" width="22.5" height="12.2" fill="#e9e5dd"/><path d="M137.5 145.5 H160 M137.5 149.5 H160" stroke="#bdb6a8" stroke-width=".6"/>
<g fill="#d2553a"><circle cx="140" cy="137" r="1.6"/><circle cx="146" cy="135" r="1.6"/><circle cx="151" cy="136.5" r="1.6"/><circle cx="155" cy="134" r="1.5"/></g>
<g fill="#4f7a35"><circle cx="142" cy="133" r="1.8"/><circle cx="149" cy="131.5" r="1.8"/><circle cx="156" cy="131" r="1.6"/></g>
<rect x="17" y="138" width="5" height="4" fill="#c7733f"/><rect x="17.5" y="142" width="5.5" height="12" fill="#4e6b5d"/>
<rect x="31" y="146" width="9" height="8" fill="#a8552f"/><rect x="44" y="141" width="11" height="13" rx="1" fill="#7a5a52"/><rect x="47" y="143" width="7" height="5" fill="#4f86a3"/>
<rect x="88" y="141" width="4.4" height="13" fill="#d9d3cc"/>
<circle cx="165" cy="147" r="3" fill="#4a6b30"/><rect x="164" y="149" width="2.4" height="5" fill="#6d6d6d"/>
<!-- columns -->
<g fill="#fbfbfb"><rect x="39.8" y="106" width="4.4" height="52"/><rect x="84" y="106" width="4.4" height="52"/><rect x="132.7" y="106" width="4.4" height="52"/><rect x="176.4" y="106" width="4.4" height="52"/></g>
<!-- porch floor & steps -->
<rect x="0" y="154.5" width="188" height="3" fill="#c49a7c"/>
<rect x="0" y="157.5" width="188" height="7" fill="#eef0f1"/>
<rect x="0" y="164" width="188" height="5" fill="#8d8072"/>
<path d="M88 157 H134 V160.5 H136 V164 H138 V168 H84 V164 H86 V160.5 H88Z" fill="#f7f7f7"/><path d="M86 160.5 H136 M84 164 H138" stroke="#d5d8da" stroke-width=".7"/>
<!-- pots -->
<rect x="85.5" y="160" width="5" height="5.5" fill="#c7693d"/><rect x="130.5" y="160" width="5" height="5.5" fill="#c7693d"/>
<g fill="#d8506a"><circle cx="90" cy="153" r="2.2"/><circle cx="93" cy="156" r="1.8"/><circle cx="129" cy="152" r="2"/><circle cx="132" cy="155" r="1.8"/></g>
<g fill="#4c7a33"><circle cx="87" cy="156" r="2.5"/><circle cx="134" cy="157" r="2.3"/></g>
<!-- mulch + lawn -->
<path d="M0 166 H188 V176 H0Z" fill="#7a5d40"/>
<path d="M0 185 V178 C30 176 60 172 84 168.5 H188 V185Z" fill="url(#lawn)"/>
<path d="M138 168.5 C160 170 176 172 188 175 V168.5Z" fill="#8a8a78" opacity=".5"/>
<!-- bushes -->
<g filter="url(#tex)"><g fill="#4c6e2e">
<ellipse cx="7" cy="160" rx="7" ry="13"/><ellipse cx="27" cy="166" rx="8" ry="9"/><ellipse cx="42" cy="165" rx="9" ry="8"/><ellipse cx="58" cy="166" rx="6" ry="7.5"/><ellipse cx="74" cy="168" rx="6" ry="5"/><ellipse cx="66" cy="172" rx="8" ry="3.5"/><ellipse cx="147" cy="169" rx="5" ry="5"/><ellipse cx="155" cy="172" rx="7" ry="3.5"/><ellipse cx="167" cy="166" rx="6.5" ry="8"/><ellipse cx="184" cy="165" rx="6" ry="9"/><ellipse cx="7" cy="175" rx="9" ry="5"/></g></g>
<g fill="#f0e6e0" opacity=".85"><circle cx="22" cy="162" r="1"/><circle cx="30" cy="160" r="1"/><circle cx="40" cy="161" r="1"/><circle cx="47" cy="164" r="1"/><circle cx="56" cy="162" r="1"/><circle cx="10" cy="155" r="1"/></g>
</svg>
</div>

<span class="tx" style="left:358.48px;top:8.80px;font-size:16.5px;font-weight:400;color:#ffffff;transform:scaleX(1.0267);-webkit-text-stroke:.55px #fff;">8 (800) 200-17-14</span>
<span class="tx" style="left:520.92px;top:10.00px;font-size:15px;font-weight:400;color:#b4b3c1;transform:scaleX(1.0500);">Консультация</span>
<span class="tx" style="left:652.95px;top:10.30px;font-size:15px;font-weight:400;color:#b4b3c1;transform:scaleX(1.0147);">О нас</span>
<span class="tx" style="left:731.45px;top:10.00px;font-size:15px;font-weight:400;color:#b4b3c1;transform:scaleX(1.0227);">Услуги+</span>
<span class="tx" style="left:814.55px;top:10.00px;font-size:15px;font-weight:400;color:#b4b3c1;transform:scaleX(1.0380);">Сотрудничество</span>
<span class="tx" style="left:967.21px;top:10.00px;font-size:15px;font-weight:400;color:#ffffff;transform:scaleX(1.0324);">Коттеджные поселки России</span>
<span class="tx" style="left:1202.75px;top:10.00px;font-size:15px;font-weight:400;color:#b4b3c1;transform:scaleX(1.0397);">Строители и магазины</span>
<span class="tx" style="left:1398.82px;top:10.30px;font-size:15px;font-weight:400;color:#b4b3c1;transform:scaleX(1.0853);">Контакты</span>
<span class="tx" style="left:321.53px;top:79.20px;font-size:15.5px;font-weight:400;color:#1c1a2e;transform:scaleX(0.9149);-webkit-text-stroke:.25px #1c1a2e;">ДЕРЕВЯННЫЕ ДОМА</span>
<span class="tx" style="left:542.60px;top:79.20px;font-size:15.5px;font-weight:400;color:#1c1a2e;transform:scaleX(0.9532);-webkit-text-stroke:.25px #1c1a2e;">КАМЕННЫЕ ДОМА</span>
<span class="tx" style="left:751.40px;top:79.20px;font-size:15.5px;font-weight:400;color:#1c1a2e;transform:scaleX(0.9508);-webkit-text-stroke:.25px #1c1a2e;">КАРКАСНЫЕ ДОМА</span>
<span class="tx" style="left:963.40px;top:79.20px;font-size:15.5px;font-weight:400;color:#1c1a2e;transform:scaleX(0.9669);-webkit-text-stroke:.25px #1c1a2e;">КОМБИНИРОВАННЫЕ ДОМА</span>
<span class="tx" style="left:1248.22px;top:79.20px;font-size:15.5px;font-weight:400;color:#1c1a2e;transform:scaleX(1.0331);-webkit-text-stroke:.25px #1c1a2e;">БАНИ</span>
<span class="tx" style="left:1367.40px;top:79.20px;font-size:15.5px;font-weight:400;color:#1c1a2e;transform:scaleX(0.9604);-webkit-text-stroke:.25px #1c1a2e;">ИНДИВИДУАЛЬНЫЙ ПРОЕКТ</span>
<span class="tx" style="left:1683.74px;top:78.60px;font-size:16.3px;font-weight:400;color:#2a2840;transform:scaleX(1.0209);">34</span>
<span class="tx" style="left:1777.13px;top:78.60px;font-size:16.3px;font-weight:400;color:#2a2840;transform:scaleX(0.9619);">10</span>
<span class="tx" style="left:528.84px;top:218.30px;font-size:44px;font-weight:700;color:#ffffff;transform:scaleX(1.0311);">Клуб</span>
<span class="tx" style="left:647.04px;top:218.30px;font-size:44px;font-weight:700;color:#ffffff;transform:scaleX(0.9747);">АРПЛАНС:</span>
<span class="tx" style="left:884.81px;top:218.30px;font-size:44px;font-weight:700;color:#ffffff;transform:scaleX(1.0698);">коттеджные</span>
<span class="tx" style="left:1178.21px;top:218.30px;font-size:44px;font-weight:700;color:#ffffff;transform:scaleX(1.0593);">посёлки</span>
<span class="tx" style="left:140.78px;top:369.80px;font-size:18px;font-weight:400;color:#ffffff;transform:scaleX(0.9370);-webkit-text-stroke:.75px #fff;">+ ДОБАВИТЬ СВОЙ ПОСЕЛОК</span>
<span class="tx" style="left:535.94px;top:369.20px;font-size:15.5px;font-weight:400;color:#6b8091;transform:scaleX(1.0219);">Выберите регион</span>
<span class="tx" style="left:1627.45px;top:371.30px;font-size:13px;font-weight:400;color:#4f6678;transform:scaleX(0.9802);-webkit-text-stroke:.6px #4f6678;">НА КАРТЕ</span>
<span class="tx" style="left:1726.01px;top:371.30px;font-size:13px;font-weight:400;color:#ffffff;transform:scaleX(1.0069);-webkit-text-stroke:.6px #fff;">СПИСКОМ</span>
<span class="tx" style="left:740.53px;top:434.50px;font-size:16.5px;font-weight:400;color:#1c1a2e;transform:scaleX(1.0373);-webkit-text-stroke:.5px #1c1a2e;">БУКАТИН ЛУГ</span>
<span class="tx" style="left:740.26px;top:475.30px;font-size:15px;font-weight:400;color:#26243a;transform:scaleX(1.0143);">Московская область, р-н. Раменки,</span>
<span class="tx" style="left:741.27px;top:498.90px;font-size:15px;font-weight:400;color:#26243a;transform:scaleX(0.9804);">ул. Красная, 5</span>
<span class="tx" style="left:741.05px;top:539.80px;font-size:15.5px;font-weight:400;color:#26243a;transform:scaleX(0.9475);">+7 895 456-67-88</span>
<span class="tx" style="left:133.39px;top:450.60px;font-size:15.7px;font-weight:400;color:#5b7080;transform:scaleX(0.8944);-webkit-text-stroke:.4px #5b7080;">ИНЖЕНЕРНЫЕ СЕТИ</span>
<span class="tx" style="left:135.12px;top:482.80px;font-size:15.5px;font-weight:400;color:#5b7080;transform:scaleX(0.9976);">электроснабжение</span>
<span class="tx" style="left:134.61px;top:512.50px;font-size:15.5px;font-weight:400;color:#5b7080;transform:scaleX(1.0172);">газоснабжение</span>
<span class="tx" style="left:134.62px;top:542.10px;font-size:15.5px;font-weight:400;color:#5b7080;transform:scaleX(1.0098);">водоснабжение</span>
<span class="tx" style="left:134.56px;top:571.80px;font-size:15.5px;font-weight:400;color:#5b7080;transform:scaleX(1.0317);">интернет</span>
<span class="tx" style="left:134.61px;top:601.60px;font-size:15.5px;font-weight:400;color:#5b7080;transform:scaleX(1.0137);">газовая котельная</span>
<span class="tx" style="left:133.34px;top:653.40px;font-size:15.7px;font-weight:400;color:#5b7080;transform:scaleX(0.9156);-webkit-text-stroke:.4px #5b7080;">БЕЗОПАСНОСТЬ</span>
<span class="tx" style="left:135.11px;top:685.20px;font-size:15.5px;font-weight:400;color:#5b7080;transform:scaleX(1.0097);">охрана территории и подъездов</span>
<span class="tx" style="left:134.63px;top:714.80px;font-size:15.5px;font-weight:400;color:#5b7080;transform:scaleX(1.0110);">противопожарная сигнализация</span>
<span class="tx" style="left:135.11px;top:744.50px;font-size:15.5px;font-weight:400;color:#5b7080;transform:scaleX(1.0063);">охранная сигнализация</span>
<span class="tx" style="left:133.33px;top:796.70px;font-size:15.7px;font-weight:400;color:#5b7080;transform:scaleX(0.9330);-webkit-text-stroke:.4px #5b7080;">ИНФРАКСТРУКТУРА</span>
<span class="tx" style="left:134.50px;top:828.40px;font-size:15.5px;font-weight:400;color:#5b7080;transform:scaleX(1.0539);">магазины</span>
<span class="tx" style="left:135.48px;top:858.00px;font-size:15.5px;font-weight:400;color:#5b7080;transform:scaleX(0.9905);">детский клуб</span>
<span class="tx" style="left:135.11px;top:887.70px;font-size:15.5px;font-weight:400;color:#5b7080;transform:scaleX(1.0090);">спортивно-оздоровительный комплекс</span>
<span class="tx" style="left:135.11px;top:917.50px;font-size:15.5px;font-weight:400;color:#5b7080;transform:scaleX(1.0126);">спортивные площадки</span>
<span class="tx" style="left:134.64px;top:947.30px;font-size:15.5px;font-weight:400;color:#5b7080;transform:scaleX(0.9873);">гольф-клуб</span>
<span class="tx" style="left:134.51px;top:976.90px;font-size:15.5px;font-weight:400;color:#5b7080;transform:scaleX(1.0437);">пляж</span>
<span class="tx" style="left:135.19px;top:1006.70px;font-size:15.5px;font-weight:400;color:#5b7080;transform:scaleX(0.9656);">служба быта</span>
<span class="tx" style="left:133.37px;top:1058.60px;font-size:15.7px;font-weight:400;color:#5b7080;transform:scaleX(0.9534);-webkit-text-stroke:.4px #5b7080;">ЭКОЛОГИЯ</span>
<svg class="abs" style="left:514px;top:409px;pointer-events:none" width="1327" height="660" viewBox="514 409 1327 660">
<defs>
<linearGradient id="msh" x1="0" y1="0" x2="1" y2="0"><stop offset="0" stop-color="#000" stop-opacity=".55"/><stop offset="1" stop-color="#000" stop-opacity="0"/></linearGradient>
<g id="pin"><path d="M0 0 L9 -5.5 L13 -3 Z" fill="url(#msh)"/><path d="M0 0 C-3.5 -6 -16 -17 -16 -28 A16 16 0 0 1 16 -28 C16 -17 3.5 -6 0 0 Z" fill="#0093f4"/></g>
</defs>
<use href="#pin" x="777.5" y="768.5"/>
<use href="#pin" x="793.5" y="781"/>
<use href="#pin" x="965" y="907.5"/>
<use href="#pin" x="1519.5" y="811"/>
<!-- hand cursor -->
<path d="M1526,806 L1522.3,803.2 C1520.7,802 1518.7,804 1519.9,805.6 L1528.5,814.2 C1530.7,816.6 1533.5,817.8 1537.1,817.8 C1542.1,817.8 1545.9,814 1545.9,809 V800.8 C1545.9,798.6 1542,798.2 1541.2,800 V798.6 C1540.9,796.6 1537,796.4 1536.2,798.2 V797 C1535.9,795 1532,794.9 1531.2,796.8 V789 A2.6,2.6 0 0 0 1526,789 Z" fill="#fff" stroke="#1f2d3a" stroke-width="1.2" stroke-linejoin="round"/>
</svg>

</body></html>
